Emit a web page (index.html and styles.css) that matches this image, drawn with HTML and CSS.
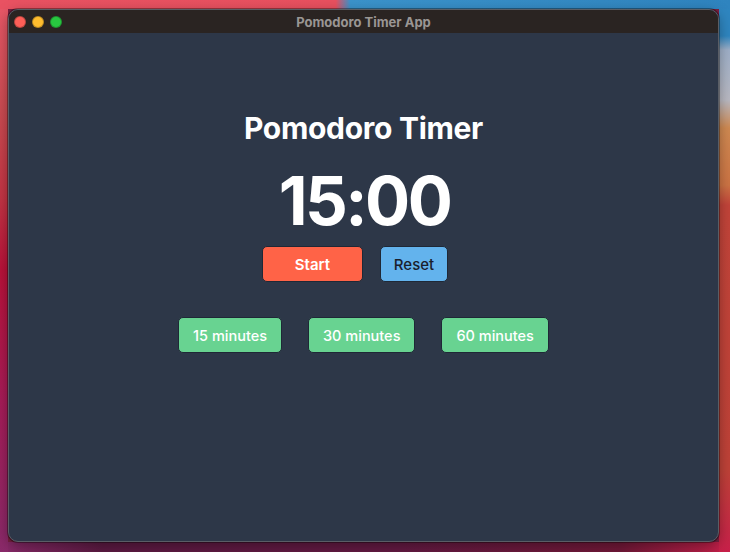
FILE: index.html
```html
<!DOCTYPE html>
<html>
<head>
<meta charset="utf-8">
<title>Pomodoro Timer App</title>
<link rel="stylesheet" href="styles.css">
</head>
<body>
<div class="desktop">
  <div class="window">
    <div class="titlebar">
      <div class="lights">
        <span class="light red"></span>
        <span class="light yellow"></span>
        <span class="light green"></span>
      </div>
      <div class="title">Pomodoro Timer App</div>
    </div>
    <main class="content">
      <h1 class="heading">Pomodoro Timer</h1>
      <div class="timer">15:00</div>
      <div class="controls">
        <button class="btn btn-start">Start</button>
        <button class="btn btn-reset">Reset</button>
      </div>
      <div class="presets">
        <button class="btn btn-preset">15 minutes</button>
        <button class="btn btn-preset">30 minutes</button>
        <button class="btn btn-preset">60 minutes</button>
      </div>
    </main>
  </div>
</div>
</body>
</html>
```

FILE: styles.css
```css
html, body {
  margin: 0;
  padding: 0;
}

body {
  width: 730px;
  height: 552px;
  overflow: hidden;
  font-family: Inter, "Liberation Sans", sans-serif;
  background:
    linear-gradient(to right, #e95262 0, #e8505f 46%, #3b93cb 48%, #2f84bf 100%) top left / 730px 9px no-repeat,
    linear-gradient(to bottom, #2f86c0 0, #2f86c0 36px, #9fb0c8 50px, #b9b9c2 100px, #d08a52 128px, #cd7444 185px, #c2443a 205px, #bf4238 470px, #c8204a 552px) top right / 11px 552px no-repeat,
    linear-gradient(to bottom, #ea5868 0, #cc4c52 110px, #c43444 200px, #ba123a 270px, #a81c58 400px, #8a2a6a 552px) top left / 8px 552px no-repeat,
    linear-gradient(to right, #8a2a6a 0, #5c1a42 14%, #641a42 55%, #721838 85%, #c8204a 100%) bottom left / 730px 10px no-repeat,
    #7a2040;
}

.desktop {
  padding: 9px 0 0 8px;
}

.window {
  width: 711px;
  height: 533px;
  box-sizing: border-box;
  border-radius: 10px;
  overflow: hidden;
  background: #2d3748;
  border: 1px solid #5a5e66;
  box-shadow: 0 0 0 1px rgba(0,0,0,0.35), 0 4px 14px rgba(0,0,0,0.35);
  display: flex;
  flex-direction: column;
}

.titlebar {
  height: 23px;
  flex: none;
  background: #2a2422;
  display: flex;
  align-items: center;
  position: relative;
}

.lights {
  display: flex;
  gap: 6px;
  padding-left: 5px;
}

.light {
  width: 12px;
  height: 12px;
  border-radius: 50%;
  box-sizing: border-box;
  border: 0.5px solid rgba(0,0,0,0.25);
}
.light.red { background: #fe5f57; }
.light.yellow { background: #febc2e; }
.light.green { background: #28c840; }

.title {
  position: absolute;
  left: 0;
  right: 0;
  text-align: center;
  font-size: 13px;
  font-weight: 700;
  color: #9a9694;
  pointer-events: none;
}

.content {
  flex: 1;
  display: flex;
  flex-direction: column;
  align-items: center;
  padding-top: 81px;
  color: #fff;
}

.heading {
  margin: 0;
  font-size: 30px;
  line-height: 28px;
  font-weight: 700;
  letter-spacing: -0.3px;
}

.timer {
  margin-top: 25px;
  font-size: 67px;
  line-height: 67px;
  font-weight: 700;
  letter-spacing: -2.6px;
  padding-left: 2px;
}

.controls {
  margin-top: 12px;
  display: flex;
}

.btn {
  font-family: Inter, "Liberation Sans", sans-serif;
  height: 36px;
  box-sizing: border-box;
  border: 1px solid #1f2836;
  border-radius: 5px;
  font-size: 15px;
  cursor: pointer;
}

.btn-start {
  width: 101px;
  background: #ff6347;
  color: #fff;
  font-weight: 600;
  margin-right: 17px;
}

.btn-reset {
  width: 68px;
  background: #63b3ed;
  color: #1a202c;
  font-weight: 500;
  margin-right: 17px;
}

.presets {
  margin-top: 35px;
  display: flex;
  gap: 26px;
}

.btn-preset {
  background: #68d391;
  color: #fff;
  font-weight: 500;
  font-size: 14.5px;
  padding: 0 14px;
}
```
